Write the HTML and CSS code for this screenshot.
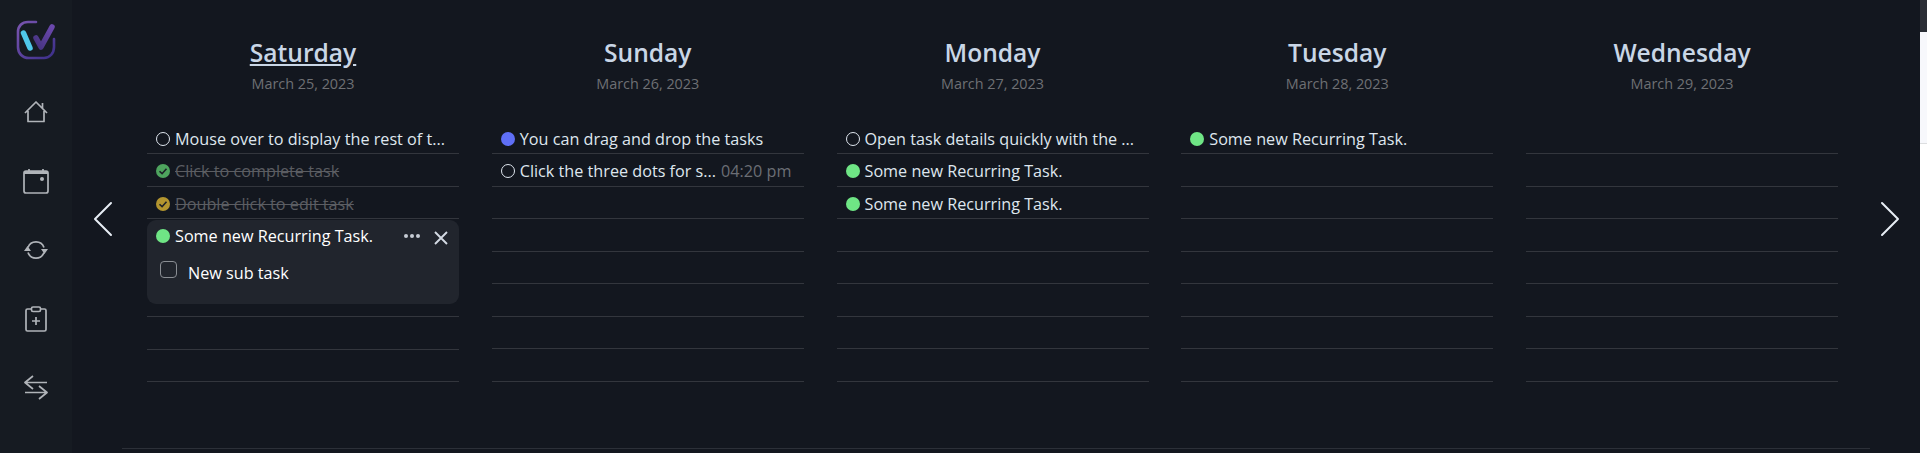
FILE: index.html
```html
<!DOCTYPE html>
<html lang="en">
<head>
    <meta charset="UTF-8">
    <title>Weekly tasks</title>
    <link rel="stylesheet" href="styles.css">
</head>
<body>
    <div class="app">
        <nav class="sidebar">
            <svg class="logo" viewBox="0 0 40 40" width="40" height="40" fill="none">
                <defs>
                    <linearGradient id="logo-ring" x1="0" y1="0" x2="1" y2="1">
                        <stop offset="0" stop-color="#7a55b0"/>
                        <stop offset="1" stop-color="#3c2f8a"/>
                    </linearGradient>
                    <linearGradient id="logo-tick" x1="0" y1="1" x2="1" y2="0">
                        <stop offset="0" stop-color="#44337f"/>
                        <stop offset="1" stop-color="#6b48ad"/>
                    </linearGradient>
                </defs>
                <path d="M20 2H12C6 2 2 6 2 12V27C2 33 6 38 13 38H28C34 38 38 33 38 27V19" stroke="url(#logo-ring)" stroke-width="2.6" stroke-linecap="round"/>
                <path d="M7.5 13L14 28" stroke="#4fc8ea" stroke-width="5.5" stroke-linecap="round"/>
                <path d="M20 18L25 27L36 7" stroke="url(#logo-tick)" stroke-width="5.5" stroke-linecap="round" stroke-linejoin="round"/>
            </svg>
            <a class="nav-item">
                <svg viewBox="0 0 24 24" width="24" height="24"><path d="M1 13L12 2L23 13M4 11V21.500H20V11M18.500 3V8"/></svg>
            </a>
            <a class="nav-item">
                <svg viewBox="0 0 26 26" width="26" height="26"><rect x="1" y="3" width="24" height="22" rx="2"/><path class="fill-bar" d="M1 3H25V6H1Z"/><path d="M6 1V3M20 1V3"/><circle class="dot" cx="19" cy="11" r="2"/></svg>
            </a>
            <a class="nav-item">
                <svg viewBox="0 0 24 24" width="24" height="24"><path d="M4 9.500A8.500 8.500 0 0 1 20 9.500M20 14.500A8.500 8.500 0 0 1 4 14.500"/><path class="dot" d="M0 13H7L3.500 8ZM24 11H17L20.500 16Z"/></svg>
            </a>
            <a class="nav-item">
                <svg viewBox="0 0 24 26" width="24" height="26"><path d="M7 3H3.500C2.500 3 2 3.500 2 4.500V23.500C2 24.500 2.500 25 3.500 25H20.500C21.500 25 22 24.500 22 23.500V4.500C22 3.500 21.500 3 20.500 3H17"/><rect x="7.500" y="1" width="9" height="4.500" rx="1.500"/><path d="M12 11V19M8 15H16"/></svg>
            </a>
            <a class="nav-item">
                <svg viewBox="0 0 24 26" width="24" height="26"><path d="M9 1L1 7.500L9 14M1 7.500H23M15 11L23 17.500L15 24M23 17.500H1"/></svg>
            </a>
        </nav>

        <main class="week">
            <button class="arrow"><svg viewBox="0 0 20 36" width="20" height="36"><path d="M18 2L2 18L18 34"/></svg></button>

            <section class="day">
                <h2 class="day-name today">Saturday</h2>
                <p class="day-date">March 25, 2023</p>
                <ul class="tasks">
                    <li class="task"><span class="dot-status open"></span><span class="task-text">Mouse over to display the rest of t...</span></li>
                    <li class="task done"><span class="dot-status check green"><svg viewBox="0 0 12 12"><path d="M3 6.200L5.200 8.300L9 4"/></svg></span><span class="task-text">Click to complete task</span></li>
                    <li class="task done"><span class="dot-status check yellow"><svg viewBox="0 0 12 12"><path d="M3 6.200L5.200 8.300L9 4"/></svg></span><span class="task-text">Double click to edit task</span></li>
                    <li class="task expanded">
                        <div class="task-head">
                            <span class="dot-status mint"></span><span class="task-text">Some new Recurring Task.</span>
                            <span class="more"><i></i><i></i><i></i></span>
                            <svg class="close" viewBox="0 0 14 14" width="14" height="14"><path d="M1 1L13 13M13 1L1 13"/></svg>
                        </div>
                        <label class="subtask"><span class="box"></span>New sub task</label>
                    </li>
                    <li class="task spacer"></li>
                    <li class="task"></li>
                    <li class="task"></li>
                </ul>
            </section>

            <section class="day">
                <h2 class="day-name">Sunday</h2>
                <p class="day-date">March 26, 2023</p>
                <ul class="tasks">
                    <li class="task"><span class="dot-status blue"></span><span class="task-text">You can drag and drop the tasks</span></li>
                    <li class="task"><span class="dot-status open"></span><span class="task-text">Click the three dots for s...</span><span class="task-time">04:20 pm</span></li>
                    <li class="task"></li>
                    <li class="task"></li>
                    <li class="task"></li>
                    <li class="task"></li>
                    <li class="task"></li>
                    <li class="task"></li>
                </ul>
            </section>

            <section class="day">
                <h2 class="day-name">Monday</h2>
                <p class="day-date">March 27, 2023</p>
                <ul class="tasks">
                    <li class="task"><span class="dot-status open"></span><span class="task-text">Open task details quickly with the ...</span></li>
                    <li class="task"><span class="dot-status mint"></span><span class="task-text">Some new Recurring Task.</span></li>
                    <li class="task"><span class="dot-status mint"></span><span class="task-text">Some new Recurring Task.</span></li>
                    <li class="task"></li>
                    <li class="task"></li>
                    <li class="task"></li>
                    <li class="task"></li>
                    <li class="task"></li>
                </ul>
            </section>

            <section class="day">
                <h2 class="day-name">Tuesday</h2>
                <p class="day-date">March 28, 2023</p>
                <ul class="tasks">
                    <li class="task"><span class="dot-status mint"></span><span class="task-text">Some new Recurring Task.</span></li>
                    <li class="task"></li>
                    <li class="task"></li>
                    <li class="task"></li>
                    <li class="task"></li>
                    <li class="task"></li>
                    <li class="task"></li>
                    <li class="task"></li>
                </ul>
            </section>

            <section class="day">
                <h2 class="day-name">Wednesday</h2>
                <p class="day-date">March 29, 2023</p>
                <ul class="tasks">
                    <li class="task"></li>
                    <li class="task"></li>
                    <li class="task"></li>
                    <li class="task"></li>
                    <li class="task"></li>
                    <li class="task"></li>
                    <li class="task"></li>
                    <li class="task"></li>
                </ul>
            </section>

            <button class="arrow arrow-right"><svg viewBox="0 0 20 36" width="20" height="36"><path d="M2 2L18 18L2 34"/></svg></button>
        </main>

        <div class="edge">
            <div class="edge-top"></div>
            <div class="edge-panel"></div>
        </div>
    </div>
</body>
</html>
```
FILE: styles.css
```css
* {
    box-sizing: border-box;
}

html {
    background-color: #fff;
}

body {
    margin: 0;
    height: 453px;
    overflow: hidden;
    background-color: #fff;
    font-family: 'Open Sans', 'Noto Sans', sans-serif;
    color: #dfe6ee;
}

.app {
    display: flex;
    width: 1927px;
    height: 453px;
}

.sidebar {
    width: 72px;
    flex-shrink: 0;
    background-color: #161b22;
    display: flex;
    flex-direction: column;
    align-items: center;
    padding-top: 20px;
}

.logo {
    margin-bottom: 31px;
}

.nav-item {
    height: 69px;
    display: flex;
    align-items: center;
    justify-content: center;
    padding-bottom: 27px;
}

.nav-item svg {
    fill: none;
    stroke: #b0b4b9;
    stroke-width: 1.7;
    stroke-linejoin: round;
}

.nav-item .dot,
.nav-item .fill-bar {
    fill: #b0b4b9;
    stroke: none;
}

.week {
    width: 1848px;
    flex-shrink: 0;
    position: relative;
    display: flex;
    align-items: flex-start;
    background-color: #13171f;
    padding-left: 21px;
}

/* line along the bottom of the week */
.week::after {
    content: "";
    position: absolute;
    left: 50px;
    right: 50px;
    bottom: 4px;
    height: 1px;
    background-color: #2c3038;
}

.arrow {
    width: 54px;
    flex-shrink: 0;
    margin-top: 201px;
    padding: 0;
    background: none;
    border: none;
    display: flex;
}

.arrow-right {
    width: 20px;
}

.arrow svg {
    fill: none;
    stroke: #e8eef5;
    stroke-width: 2;
    stroke-linecap: round;
    stroke-linejoin: round;
}

.day {
    width: 312px;
    flex-shrink: 0;
    margin-right: 32.750px;
    padding-top: 37px;
}

.day:nth-of-type(5) {
    margin-right: 42px;
}

.day-name {
    margin: 0;
    text-align: center;
    font-size: 24.600px;
    line-height: 32px;
    font-weight: 600;
    color: #c9d6e6;
}

.today {
    text-decoration: underline;
}

.day-date {
    margin: 5px 0 0;
    text-align: center;
    font-size: 14.400px;
    line-height: 20px;
    color: #6e7074;
}

.tasks {
    list-style: none;
    margin: 27.500px 0 0;
    padding: 0;
}

.task {
    height: 32.500px;
    display: flex;
    align-items: center;
    padding: 3px 8px 0 9px;
    font-size: 16.200px;
    border-bottom: 1px solid #33363d;
}

.task-text {
    white-space: nowrap;
}

.task-time {
    flex-shrink: 0;
    margin-left: 5px;
    color: #6b6e75;
}

.done {
    color: #5b5d62;
    text-decoration: line-through;
}

.dot-status {
    width: 14px;
    height: 14px;
    border-radius: 50%;
    flex-shrink: 0;
    margin-right: 5px;
    display: flex;
}

.open {
    border: 1.500px solid #dfe6ee;
}

.blue {
    background-color: #5f6ff6;
}

.mint {
    background-color: #6fe585;
}

.green {
    background-color: #4ea45e;
}

.yellow {
    background-color: #b3952f;
}

.check svg {
    width: 14px;
    height: 14px;
    fill: none;
    stroke: #1d2128;
    stroke-width: 1.400;
}

.expanded {
    display: block;
    height: 84px;
    margin-top: 1px;
    padding: 5px 8px 0 9px;
    background-color: #21252d;
    border-radius: 9px;
    border-bottom: none;
    color: #fff;
}

.spacer {
    height: 13px;
    padding: 0;
}

.task-head {
    display: flex;
    align-items: center;
}

.more {
    margin-left: auto;
    display: flex;
    gap: 1.500px;
}

.more i {
    width: 4.500px;
    height: 4.500px;
    border-radius: 50%;
    background-color: #c6ccd4;
}

.close {
    margin-left: 14px;
    margin-right: 3px;
    margin-top: 3px;
    fill: none;
    stroke: #d3dae3;
    stroke-width: 1.900;
}

.subtask {
    display: flex;
    align-items: center;
    margin-top: 15px;
    padding-left: 4px;
}

.box {
    width: 17px;
    height: 17px;
    border: 1px solid #8a8e94;
    border-radius: 4px;
    margin-right: 11px;
    margin-top: -8px;
}

.edge {
    width: 7px;
    flex-shrink: 0;
    display: flex;
    flex-direction: column;
    background-color: #fff;
}

.edge-top {
    height: 32px;
    background-color: #2a2e35;
}

.edge-panel {
    height: 112px;
    background-color: #f7f8fc;
    border-bottom: 1px solid #dcdee0;
}
```
